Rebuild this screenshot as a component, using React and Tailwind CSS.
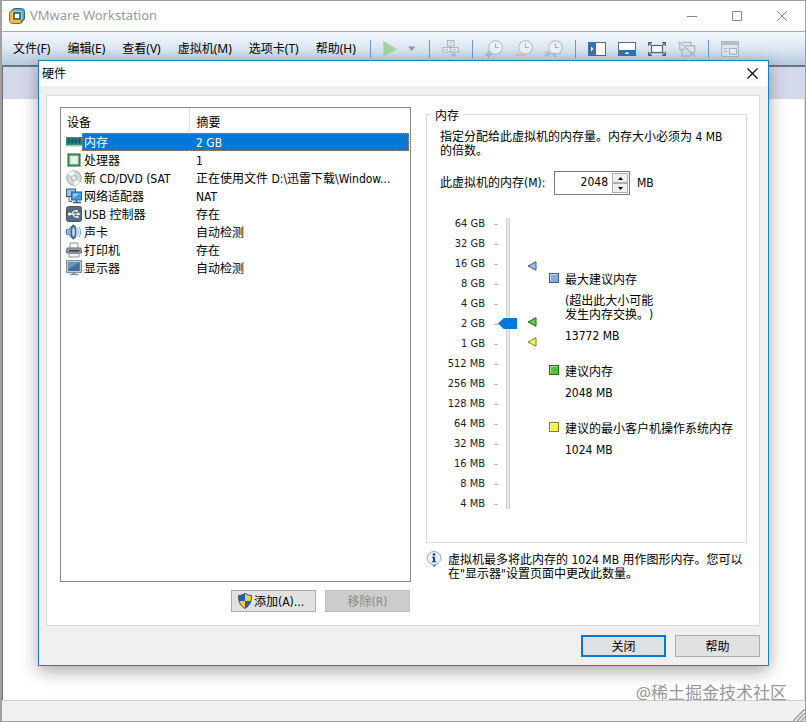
const UI = "font-['Noto_Sans','Noto_Sans_CJK_SC',sans-serif]";
const DIALOG = "font-['DejaVu_Sans_Condensed','Noto_Sans_CJK_SC',sans-serif]";

const menus = ['文件(F)', '编辑(E)', '查看(V)', '虚拟机(M)', '选项卡(T)', '帮助(H)'];

function Logo() {
  return (
    <svg width="16" height="16" viewBox="0 0 16 16" fill="none">
      <rect x="0.5" y="2.5" width="13" height="13" rx="3" fill="#f0b030" stroke="#7d6a3c" />
      <rect x="3" y="0.5" width="12.5" height="12.5" rx="3" fill="#52b4cc" stroke="#3f6470" />
      <path d="M1 13V6q0-3 3-3h1v8h6v3q0 1-1 1H3q-2 0-2-2z" fill="#f3b637" />
      <rect x="3.5" y="3.5" width="9" height="9" rx="1.5" stroke="#f6c95c" />
      <rect x="5" y="5" width="6" height="6" fill="#fff" stroke="#34444c" strokeWidth="1.4" />
    </svg>
  );
}

function Clock({ children }) {
  return (
    <svg width="18" height="18" viewBox="0 0 18 18" fill="none">
      <circle cx="10.5" cy="7.5" r="6.8" fill="#edf1f6" stroke="#bcc3cd" strokeWidth="1.2" />
      <path d="M10.5 3.500V7.500H14" stroke="#aab3bf" strokeWidth="1.2" />
      {children}
    </svg>
  );
}

const Sep = () => <span className="h-[18px] w-px shrink-0 bg-[#6f97d0]" />;

function Tool({ label, children }) {
  return (
    <button type="button" aria-label={label} className="flex h-[18px] w-[18px] shrink-0 items-center justify-center">
      {children}
    </button>
  );
}

function Toolbar() {
  return (
    <div className="flex h-[36px] items-center gap-3 overflow-hidden border-t border-b-2 border-t-[#86b4dc] border-b-[#6a7484] bg-linear-to-b from-[#f4f8fd] via-[#dce7f3] to-[#b4c9df] pl-[11px]">
      <nav className="mr-0.5 flex shrink-0 gap-[17px]">
        {menus.map((m) => (
          <button key={m} type="button" className="text-xs leading-4 whitespace-nowrap text-black">
            {m}
          </button>
        ))}
      </nav>
      <Sep />
      <button type="button" aria-label="启动" className="flex w-[34px] shrink-0 items-center justify-between">
        <svg width="15" height="16" viewBox="0 0 15 16">
          <path d="M0.5 0.5L14 8L0.5 15.5z" fill="#a3d3a0" stroke="#b4dcb2" />
        </svg>
        <svg width="10" height="6" viewBox="0 0 10 6">
          <path d="M1 0.5h7.5L4.75 5z" fill="#8c9bb2" />
        </svg>
      </button>
      <Sep />
      <Tool label="发送按键">
        <svg width="18" height="18" viewBox="0 0 18 18" fill="none" stroke="#b0b8c4" strokeWidth="1.2">
          <path d="M5.5 0.600h6.500v5.400H5.500zM1 7.500h7.700v4.500H1zM8.700 7.500H16.500v4.500H8.700z" fill="#e8edf4" />
          <path d="M11.500 12v4M9 14l2.500 2.500L14 14M8.700 6v2M3.500 9.700h2.500M11.500 9.700h2.500M7.500 3h2.500" />
        </svg>
      </Tool>
      <Sep />
      <Tool label="拍摄快照">
        <Clock>
          <path d="M3.500 11v7M0 14.500h7" stroke="#b0b8c4" strokeWidth="2" />
        </Clock>
      </Tool>
      <Tool label="恢复快照">
        <Clock>
          <path d="M0 14.500L3 11.500V13.500H11V16H0z" fill="#d9c8b6" />
        </Clock>
      </Tool>
      <Tool label="管理快照">
        <Clock>
          <path d="M1 11.500a2.500 2.500 0 1 0 3 3.500h4a2.500 2.500 0 0 0 4 1.500l-2-1 2-1.500a2.500 2.500 0 0 0-4-0.500H4.500a2.500 2.500 0 0 0-3.500-2l2 2-1.500 1z" fill="#a9bfd6" />
        </Clock>
      </Tool>
      <Sep />
      <Tool label="显示库">
        <svg width="18" height="14" viewBox="0 0 18 14">
          <rect x="0.500" y="0.500" width="17" height="13" fill="#fff" stroke="#5c6875" />
          <path d="M0 0h8v14H0z" fill="#3c72aa" />
          <path d="M3 4.500v5L5.500 7z" fill="#fff" />
        </svg>
      </Tool>
      <Tool label="显示缩略图">
        <svg width="18" height="14" viewBox="0 0 18 14">
          <rect x="0.500" y="0.500" width="17" height="13" fill="#fff" stroke="#5c6875" />
          <path d="M0 8h18v6H0z" fill="#3c72aa" />
          <path d="M6.500 12h5L9 9.800z" fill="#fff" />
        </svg>
      </Tool>
      <Tool label="全屏">
        <svg width="18" height="14" viewBox="0 0 18 14" fill="none" stroke="#5a6572" strokeWidth="1.200">
          <rect x="3.500" y="3.500" width="11" height="7" fill="#fff" />
          <path d="M0.600 4V0.600H4M14 0.600h3.400V4M17.400 10v3.400H14M4 13.400H0.600V10M1 1l2 2M17 1l-2 2M1 13l2-2M17 13l-2-2" />
        </svg>
      </Tool>
      <Tool label="Unity">
        <svg width="18" height="16" viewBox="0 0 18 16" fill="none" stroke="#b2bac5" strokeWidth="1.400">
          <path d="M4 1.500h9V4M1.700 2v6.500H7" />
          <path d="M7 4.700h9.500v7H12" fill="#e2e9f1" />
          <path d="M4 9v6h9v-2" />
          <path d="M0.500 0.500L17.500 15.500" />
        </svg>
      </Tool>
      <Sep />
      <Tool label="控制台视图">
        <svg width="18" height="16" viewBox="0 0 18 16" fill="none" stroke="#aeb7c3">
          <rect x="0.500" y="0.500" width="17" height="15" fill="#dde5ee" />
          <path d="M0 0h18v4H0z" fill="#b4bcc8" stroke="none" />
          <path d="M3 7.500h3M3 10.500h3" />
          <rect x="8.500" y="7.500" width="7" height="5.500" fill="#eaf0f6" stroke="#a5b3c4" />
        </svg>
      </Tool>
    </div>
  );
}

const icons = {
  memory: (
    <>
      <path d="M0 3h16v8H0z" fill="#2f8c83" />
      <path d="M1.500 4.500h2.500v5H1.500zM5 4.500h2.500v5H5zM8.500 4.500H11v5H8.500zM12 4.500h2.500v5H12z" fill="#1c5570" />
      <path d="M0 11h16v1.500H0z" fill="#a8c8b0" />
    </>
  ),
  cpu: (
    <>
      <rect x="2" y="2" width="12" height="12" fill="#3d9a48" stroke="#1f7030" />
      <rect x="4" y="4" width="8" height="8" fill="#eef2ee" stroke="#c5d5c5" />
    </>
  ),
  disc: (
    <>
      <circle cx="8" cy="8" r="7.300" fill="#d4d6da" stroke="#a4a7ad" />
      <path d="M8 8L2 3.500A7 7 0 0 1 8 1zM8 8l6 4.500A7 7 0 0 1 8 15z" fill="#f3f4f6" />
      <circle cx="8" cy="8" r="2.300" fill="#fff" stroke="#9fa2a8" />
    </>
  ),
  net: (
    <>
      <rect x="0.600" y="1" width="9" height="7.500" fill="#9cc4e4" stroke="#345a80" />
      <path d="M3 9v4.500h3" fill="none" stroke="#345a80" />
      <rect x="5.600" y="4" width="10" height="8" fill="#3d9be0" stroke="#345a80" />
      <path d="M7 5.500h7L7 10z" fill="#8accf4" />
      <path d="M7 14.500h8M10.500 12v2.500" stroke="#345a80" strokeWidth="1.500" />
    </>
  ),
  usb: (
    <>
      <rect x="0.500" y="0.500" width="15" height="15" rx="2" fill="#566c80" stroke="#43586b" />
      <path d="M3 8h9M5.500 8L8 5h2M6.500 8L9 11h2" stroke="#fff" strokeWidth="1.100" fill="none" />
      <circle cx="3.500" cy="8" r="1.600" fill="#fff" />
      <path d="M11.500 6.200L14.500 8l-3 1.800zM9.500 4h2v2h-2zM10.500 10h2v2h-2z" fill="#fff" />
    </>
  ),
  sound: (
    <>
      <path d="M0.500 5.500h2L7 1.500v13l-4.500-4h-2z" fill="#8fb6d8" stroke="#4f7ca6" />
      <ellipse cx="7.500" cy="8" rx="2.500" ry="7" fill="#3f76aa" stroke="#315c86" />
      <ellipse cx="7.500" cy="8" rx="1.200" ry="4.500" fill="#d2e6f4" />
      <path d="M11.500 4.500q2 3.500 0 7M13.500 3q2.500 5 0 10" fill="none" stroke="#78a6cc" />
    </>
  ),
  printer: (
    <>
      <path d="M4 1h8v6H4z" fill="#fafbfd" stroke="#8a9098" />
      <path d="M1 6h14l0.500 5H0.500z" fill="#a0a6ae" stroke="#686e76" />
      <path d="M2.500 8h11v1.500h-11z" fill="#353a40" />
      <path d="M3 11.500h10V15H3z" fill="#f2f4f8" stroke="#8a9098" />
    </>
  ),
  display: (
    <>
      <rect x="0.600" y="0.600" width="14.800" height="12" fill="#c7d1da" stroke="#77889a" />
      <rect x="2.200" y="2" width="11.600" height="9" fill="#426f9e" />
      <path d="M2.200 2h11.600L2.200 9z" fill="#6c97c0" />
      <path d="M6 12.600h4v1.400h2.500v1.300h-9V14H6z" fill="#8999a8" />
    </>
  ),
};

const devices = [
  ['memory', '内存', '2 GB'],
  ['cpu', '处理器', '1'],
  ['disc', '新 CD/DVD (SAT', '正在使用文件 D:\\迅雷下载\\Window...'],
  ['net', '网络适配器', 'NAT'],
  ['usb', 'USB 控制器', '存在'],
  ['sound', '声卡', '自动检测'],
  ['printer', '打印机', '存在'],
  ['display', '显示器', '自动检测'],
];

function DeviceList() {
  return (
    <div className="min-h-[475px] flex-1 border border-[#828790] bg-white">
      <table className="w-full table-fixed border-collapse">
        <thead>
          <tr className="h-[25px] text-left">
            <th className="w-[128px] border-r border-[#e2e2e2] pt-1 pl-1.5 font-normal">设备</th>
            <th className="pt-1 pl-[7px] font-normal">摘要</th>
          </tr>
        </thead>
        <tbody>
          {devices.map(([icon, name, summary], i) => (
            <tr key={icon} className="h-[18px]">
              <td className="p-0 pl-[5px]">
                <div className="flex h-[18px] items-center">
                  <svg width="16" height="16" viewBox="0 0 16 16" className="shrink-0">
                    {icons[icon]}
                  </svg>
                  <span
                    className={
                      i === 0
                        ? 'h-[18px] flex-1 border border-r-0 border-dotted border-[#8f8a80] bg-[#0078d7] pl-px leading-[18px] text-white'
                        : 'h-[18px] w-[100px] pl-0.5 leading-5 whitespace-nowrap'
                    }
                  >
                    {name}
                  </span>
                </div>
              </td>
              <td className="p-0 pr-px">
                <div
                  className={
                    i === 0
                      ? 'h-[18px] border border-l-0 border-dotted border-[#8f8a80] bg-[#0078d7] pl-[7px] leading-[18px] text-white'
                      : 'h-[18px] pl-[7px] leading-5 whitespace-nowrap'
                  }
                >
                  {summary}
                </div>
              </td>
            </tr>
          ))}
        </tbody>
      </table>
    </div>
  );
}

const scale = ['64 GB', '32 GB', '16 GB', '8 GB', '4 GB', '2 GB', '1 GB', '512 MB', '256 MB', '128 MB', '64 MB', '32 MB', '16 MB', '8 MB', '4 MB'];

function Marker({ fill, stroke }) {
  return (
    <svg width="10" height="10" viewBox="0 0 10 10" className="block">
      <path d="M1 5L9 0.800V9.200z" fill={fill} stroke={stroke} />
    </svg>
  );
}

function Square({ fill, stroke }) {
  return (
    <svg width="10" height="10" viewBox="0 0 10 10" className="shrink-0">
      <rect x="0.500" y="0.500" width="9" height="9" fill={fill} stroke={stroke} />
      <path d="M1.500 8.500v-7h7" fill="none" stroke="#fff" strokeOpacity="0.5" />
    </svg>
  );
}

function Legend({ fill, stroke, title, note, value }) {
  return (
    <div className="flex gap-1.5">
      <Square fill={fill} stroke={stroke} />
      <div className="whitespace-nowrap">
        <p>{title}</p>
        {note && <p className="mt-[7px]">{note}</p>}
        <p className="mt-[7px]">{value}</p>
      </div>
    </div>
  );
}

function MemoryPanel() {
  return (
    <fieldset className="relative h-[429px] border border-[#dcdcdc] pl-[13px]">
      <legend className="absolute -top-2 left-1 bg-white px-1 leading-[18px]">内存</legend>
      <p className="pt-[15px] pr-3">指定分配给此虚拟机的内存量。内存大小必须为 4 MB 的倍数。</p>
      <div className="mt-[13px] flex h-6 items-center">
        <label htmlFor="mem" className="w-[114px] whitespace-nowrap">
          此虚拟机的内存(M):
        </label>
        <div className="flex h-6 w-[76px] border border-[#7a7a7a] bg-white">
          <input id="mem" type="text" defaultValue="2048" className="w-0 flex-1 bg-transparent pr-1 pb-0.5 text-right outline-none" />
          <div className="my-px mr-px flex w-4 flex-col">
            <button type="button" aria-label="增加" className="flex flex-1 items-center justify-center border border-[#adadad] bg-[#f0f0f0]">
              <svg width="5" height="3" viewBox="0 0 5 3"><path d="M0 3L2.500 0L5 3z" /></svg>
            </button>
            <button type="button" aria-label="减少" className="flex flex-1 items-center justify-center border border-[#adadad] bg-[#f0f0f0]">
              <svg width="5" height="3" viewBox="0 0 5 3"><path d="M0 0L2.500 3L5 0z" /></svg>
            </button>
          </div>
        </div>
        <span className="ml-[7px]">MB</span>
      </div>
      <div className="mt-[19px] flex items-start">
        <ul className="w-[58px] text-[11px]">
          {scale.map((s) => (
            <li key={s} className="flex h-5 items-center justify-end gap-[9px] whitespace-nowrap">
              <span className="leading-5 text-[#222]">{s}</span>
              <span className="h-px w-1 bg-[#bdbdbd]" />
            </li>
          ))}
        </ul>
        <div className="relative mt-1 h-[291px] w-[19px]">
          <span className="absolute inset-y-0 left-2 w-1 border-x border-[#d0d0d0] bg-[#e7eaea]" />
          <input
            type="range"
            aria-label="虚拟机内存"
            min="0"
            max="14"
            step="1"
            defaultValue="9"
            className="relative m-0 block h-full w-[19px] appearance-none bg-transparent [direction:rtl] [writing-mode:vertical-lr] [&::-webkit-slider-thumb]:h-[11px] [&::-webkit-slider-thumb]:w-[19px] [&::-webkit-slider-thumb]:appearance-none [&::-webkit-slider-thumb]:bg-[#0078d7] [&::-webkit-slider-thumb]:[clip-path:polygon(0_50%,30%_0,100%_0,100%_100%,30%_100%)]"
          />
        </div>
        <div className="ml-2.5 flex flex-col pt-[47px]">
          <Marker fill="#9db9e6" stroke="#3a5a96" />
          <div className="mt-[46px] flex flex-col gap-2.5">
            <Marker fill="#5fd03c" stroke="#1c6a1c" />
            <Marker fill="#f8f24c" stroke="#80801c" />
          </div>
        </div>
        <div className="ml-3 flex flex-col gap-[22px] pt-[59px]">
          <Legend
            fill="#86a8de"
            stroke="#3c5c94"
            title="最大建议内存"
            note={<>(超出此大小可能<br />发生内存交换。)</>}
            value="13772 MB"
          />
          <Legend fill="#4fc332" stroke="#1c6a1c" title="建议内存" value="2048 MB" />
          <Legend fill="#f8f04c" stroke="#80801c" title="建议的最小客户机操作系统内存" value="1024 MB" />
        </div>
      </div>
    </fieldset>
  );
}

function Dialog() {
  return (
    <section
      role="dialog"
      aria-labelledby="dlg"
      className={`absolute top-[60px] right-[37px] left-[38px] min-w-[731px] border border-[#1c7fc0] bg-[#f0f0f0] text-xs leading-[14px] text-black shadow-[0_5px_16px_rgba(0,0,0,0.35)] [text-spacing-trim:space-all] ${DIALOG}`}
    >
      <header className="flex h-[25px] items-center justify-between bg-white pr-2.5 pl-[3px]">
        <h1 id="dlg" className="font-normal">硬件</h1>
        <button type="button" aria-label="关闭对话框">
          <svg width="11" height="11" viewBox="0 0 11 11" stroke="#000" strokeWidth="1.100"><path d="M0.500 0.500l10 10M10.500 0.500l-10 10" /></svg>
        </button>
      </header>
      <div className="mt-[9px] mr-2 ml-[7px] flex gap-[15px] border border-[#dcdcdc] bg-white pt-[11px] pr-3 pb-[13px] pl-[13px]">
        <div className="flex flex-1 flex-col">
          <DeviceList />
          <div className="mt-2 flex justify-end gap-[9px] pr-px">
            <button type="button" className="flex h-[22px] w-[85px] items-center border border-[#adadad] bg-[#e1e1e1] pl-1.5 whitespace-nowrap">
              <svg width="14" height="16" viewBox="0 0 14 16">
                <path d="M7 0.500Q10 2.500 13.500 2.500Q14 11.500 7 15.500Q0 11.500 0.500 2.500Q4 2.500 7 0.500z" fill="#1c62ac" />
                <path d="M7 0.500Q10 2.500 13.500 2.500Q13.700 5.500 13 8H7zM7 8v7.500Q2.300 13 1 8z" fill="#f7cf3c" />
                <path d="M7 0.500Q10 2.500 13.500 2.500Q14 11.500 7 15.500Q0 11.500 0.500 2.500Q4 2.500 7 0.500z" fill="none" stroke="#4b5866" />
              </svg>
              <span className="ml-0.5 pt-0.5">添加(A)...</span>
            </button>
            <button type="button" disabled className="h-[22px] w-[85px] border border-[#bfbfbf] bg-[#cccccc] pt-0.5 text-[#8a8a8a]">
              移除(R)
            </button>
          </div>
        </div>
        <div className="w-[321px] pt-[7px]">
          <MemoryPanel />
          <div className="mt-2 flex gap-1.5">
            <svg width="16" height="17" viewBox="0 0 16 17" className="shrink-0">
              <path d="M8 0.500a7 6.500 0 0 1 2 12.700L8.500 16L6 13.200A7 6.500 0 0 1 8 0.500z" fill="#e9f2fb" stroke="#8badd2" />
              <path d="M10 13.200L8.500 16L6 13.200q2 0.500 4 0z" fill="#4c86c4" />
              <circle cx="8" cy="3.500" r="1.300" fill="#1c3c9c" />
              <path d="M6 5.700h3v4.600h1.200v1H5.800v-1H7V6.700H6z" fill="#1c3c9c" />
            </svg>
            <p className="pt-0.5">虚拟机最多将此内存的 1024 MB 用作图形内存。您可以在"显示器"设置页面中更改此数量。</p>
          </div>
        </div>
      </div>
      <footer className="flex justify-end gap-[9px] pt-[9px] pr-2 pb-2">
        <button type="button" className="h-[22px] w-[85px] border-2 border-[#0078d7] bg-[#e1e1e1] pt-0.5">关闭</button>
        <button type="button" className="h-[22px] w-[85px] border border-[#adadad] bg-[#e1e1e1] pt-0.5">帮助</button>
      </footer>
    </section>
  );
}

export default function App() {
  return (
    <main className={`relative flex min-h-screen flex-col border border-l-2 border-[#a0a0a0] bg-white ${UI}`}>
      <div className="flex h-[30px] items-center gap-[5px] pr-[18px] pl-[7px]">
        <Logo />
        <span className="flex-1 text-[13px] text-[#999]">VMware Workstation</span>
        <div className="flex items-center gap-[35px] text-[#888]">
          <button type="button" aria-label="最小化">
            <svg width="10" height="10" viewBox="0 0 10 10" stroke="currentColor"><path d="M0 5.500h10" /></svg>
          </button>
          <button type="button" aria-label="最大化">
            <svg width="10" height="10" viewBox="0 0 10 10" stroke="currentColor" fill="none"><path d="M0.500 0.500h9v9h-9z" /></svg>
          </button>
          <button type="button" aria-label="关闭">
            <svg width="10" height="10" viewBox="0 0 10 10" stroke="currentColor"><path d="M0 0l10 10M10 0L0 10" /></svg>
          </button>
        </div>
      </div>
      <Toolbar />
      <div className="flex-1 border-r border-l border-r-[#d8d8d8] border-l-[#6f6f6f] bg-white">
        <div className="h-8 bg-[#d3d9ea]" />
      </div>
      <div className="flex h-[21px] items-end justify-end border-t border-[#d0d0d0] bg-[#f0f0f0]">
        <svg width="12" height="12" viewBox="0 0 12 12" stroke="#a0a0a0" strokeWidth="1.500"><path d="M0 12L12 0M4 12l8-8M8 12l4-4" /></svg>
      </div>
      <div className="absolute top-[680px] right-[18px] text-[17px] leading-6 text-[#999]">@稀土掘金技术社区</div>
      <div className="absolute inset-0 -m-px -ml-0.5 overflow-visible">
        <Dialog />
      </div>
    </main>
  );
}
